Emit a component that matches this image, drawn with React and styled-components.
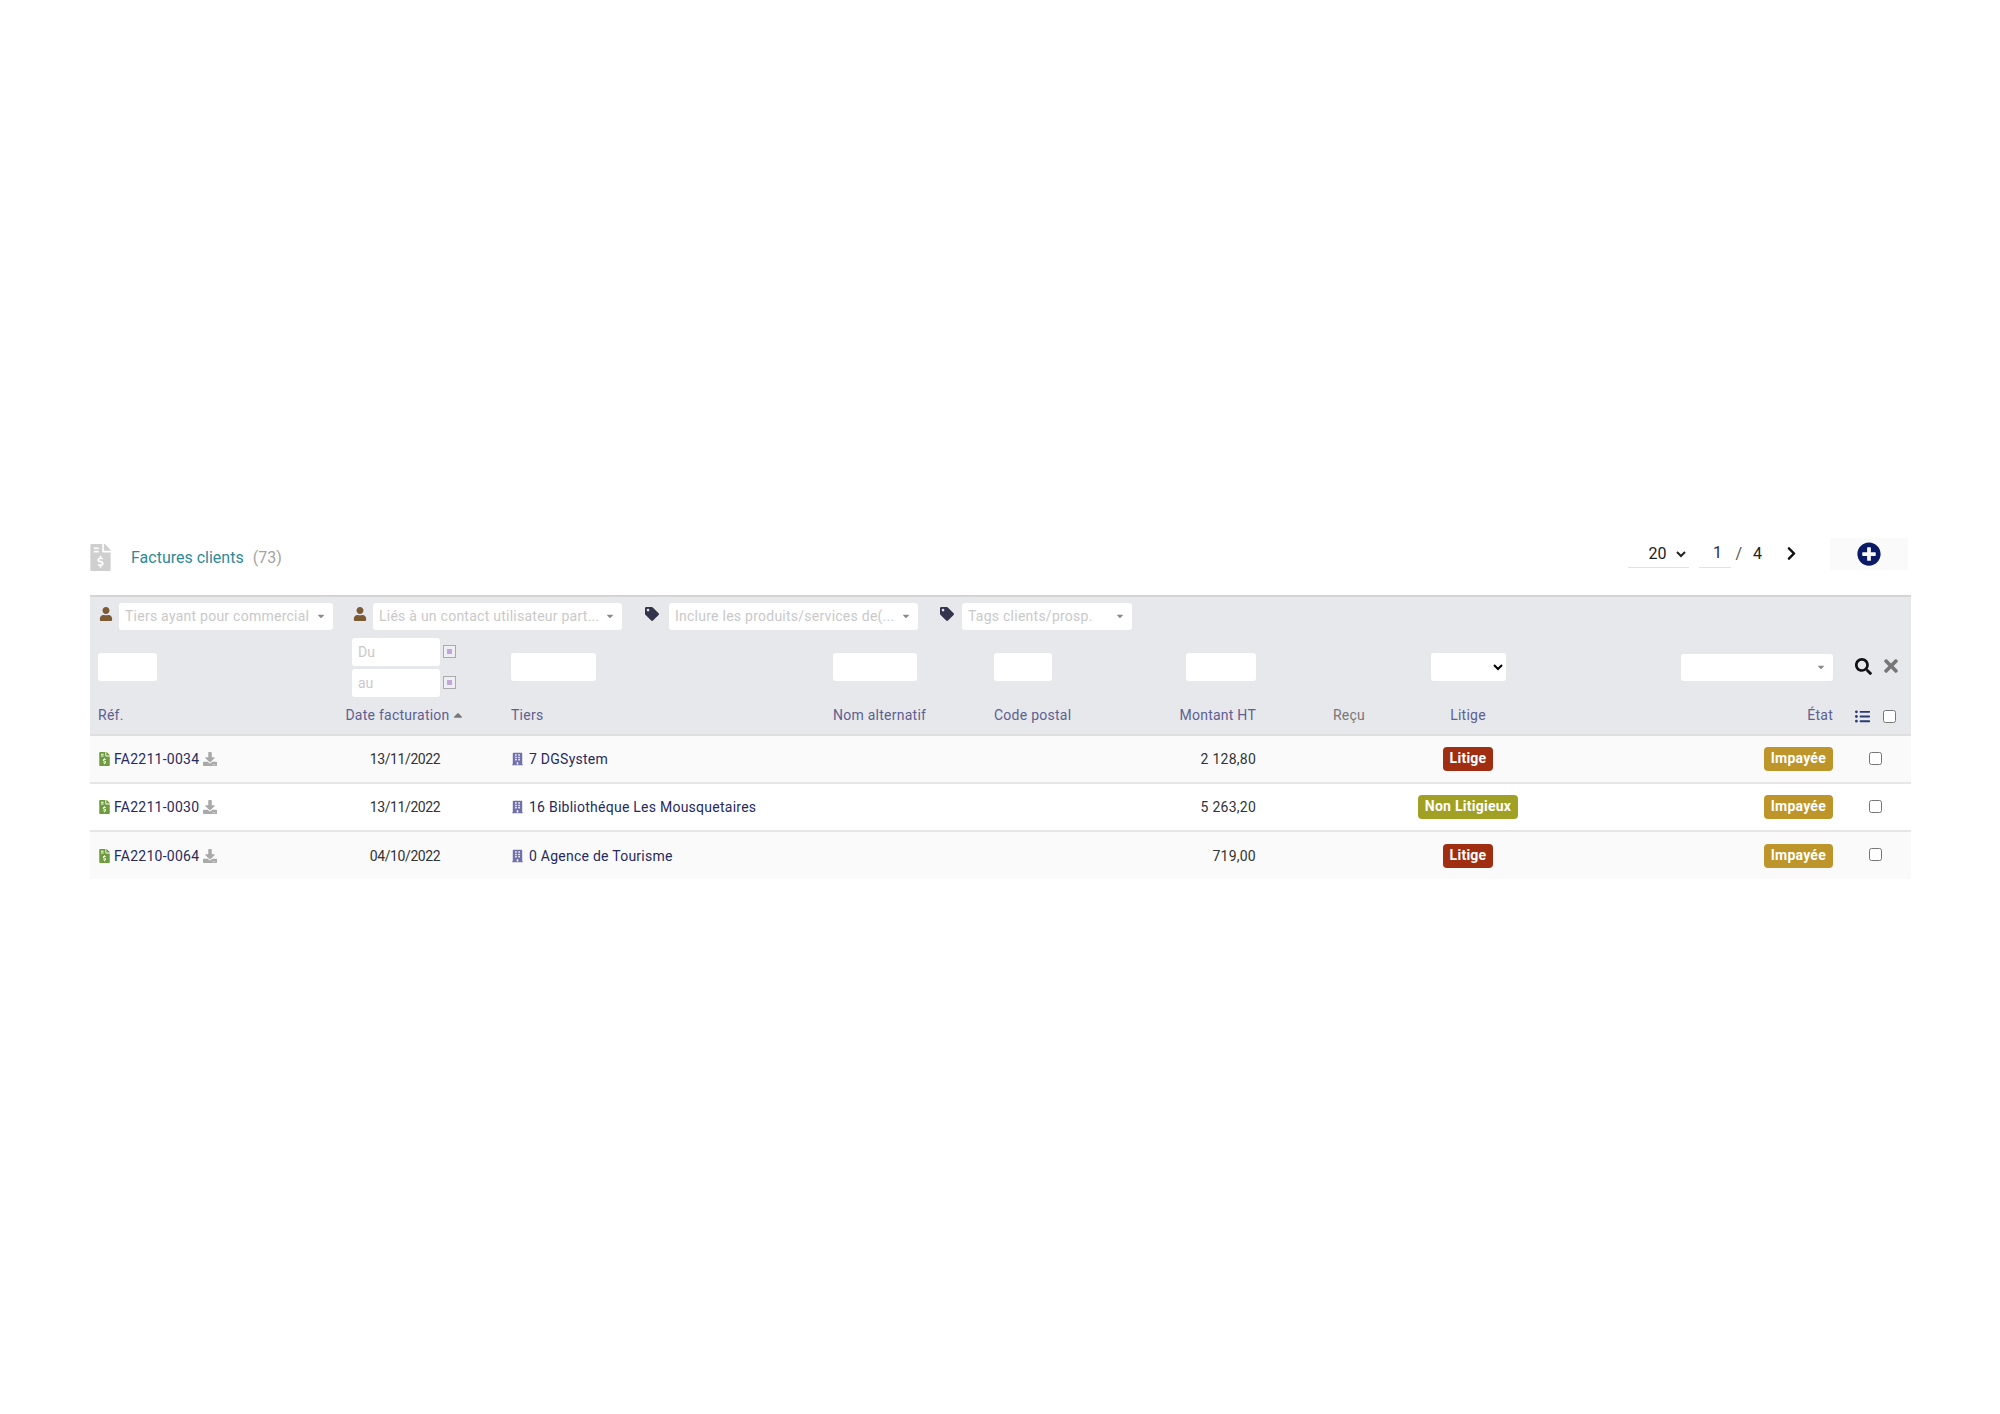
import React from "react";
import styled, { createGlobalStyle } from "styled-components";
import {
  FaFileInvoiceDollar,
  FaUser,
  FaTag,
  FaBuilding,
  FaDownload,
  FaPlusCircle,
  FaSearch,
  FaTimes,
  FaListUl,
  FaChevronRight,
  FaCaretDown,
  FaCaretUp,
} from "react-icons/fa";

const GlobalStyle = createGlobalStyle`
  body {
    margin: 0;
    background: #fff;
    font-family: Roboto, "Liberation Sans", sans-serif;
    font-size: 14px;
    letter-spacing: 0.25px;
  }
`;

const COLUMNS = "217px 196px 322px 161px 114px 164px 109px 190px 278px 70px";

const Page = styled.div`
  width: 2000px;
  height: 1414px;
  box-sizing: border-box;
  padding: 530px 89px 0 90px;
`;

const TitleBar = styled.header`
  display: flex;
  align-items: center;
  justify-content: space-between;
  height: 65px;
  padding-right: 3px;
  letter-spacing: 0;
`;

const TitleGroup = styled.div`
  display: flex;
  align-items: center;
  padding-bottom: 11px;
`;

const TitleIcon = styled(FaFileInvoiceDollar)`
  width: 21px;
  height: 27px;
  color: #cfcfcf;
  margin-right: 20px;
`;

const Title = styled.h1`
  margin: 0;
  font-size: 16px;
  font-weight: 400;
  color: #2f8a98;
`;

const Count = styled.span`
  margin-left: 9px;
  font-size: 16px;
  color: #a3a3a3;
`;

const Pager = styled.div`
  display: flex;
  align-items: center;
  height: 32px;
  margin-top: -18px;
  font-size: 16px;
  color: #222;
`;

const PerPage = styled.select`
  width: 61px;
  height: 28px;
  padding: 0 0 0 16px;
  background: #fff;
  border: 0;
  border-bottom: 1px solid #e2e2e2;
  font-family: inherit;
  font-size: 16px;
  color: #222;
`;

const PageNumber = styled.span`
  box-sizing: border-box;
  width: 32px;
  height: 28px;
  margin-left: 10px;
  padding-left: 4px;
  line-height: 26px;
  text-align: center;
  border-bottom: 1px solid #e2e2e2;
  color: #262a5e;
`;

const Slash = styled.span`
  margin-left: 4px;
  color: #555;
`;

const PageTotal = styled.span`
  margin-left: 11px;
`;

const NextIcon = styled(FaChevronRight)`
  width: 13px;
  height: 15px;
  margin-left: 23px;
  color: #111;
`;

const AddButton = styled.button`
  display: flex;
  align-items: center;
  justify-content: center;
  width: 78px;
  height: 32px;
  margin-left: 32px;
  padding: 0;
  background: #fafafa;
  border: 0;
  color: #0a1a66;
`;

const FilterPanel = styled.section`
  background: #e7e8ec;
  border-top: 2px solid #d4d4d4;
  border-bottom: 2px solid #dfdfdf;
`;

const TagRow = styled.div`
  display: flex;
  align-items: center;
  height: 40px;
  padding: 0 0 2px 9px;
  box-sizing: border-box;
`;

const TagFilter = styled.div`
  display: flex;
  align-items: center;
  margin-right: ${(p) => p.$gap}px;
`;

const PickerIcon = styled.span`
  display: flex;
  align-items: center;
  justify-content: center;
  width: 14px;
  height: 14px;
  margin: -4px ${(p) => p.$gap}px 0 0;
  color: ${(p) => p.$color};
`;

const Picker = styled.div`
  display: flex;
  align-items: center;
  justify-content: space-between;
  box-sizing: border-box;
  width: ${(p) => p.$width}px;
  height: 27px;
  margin-right: ${(p) => p.$end || 0}px;
  padding: 0 7px 0 6px;
  background: #fff;
  border-radius: 3px;
  color: #c9c9c9;
  white-space: nowrap;
  overflow: hidden;
`;

const Caret = styled(FaCaretDown)`
  flex: none;
  width: 10px;
  height: 10px;
  color: #8a8a8a;
`;

const TableGrid = styled.div`
  display: grid;
  grid-template-columns: ${COLUMNS};
  align-items: center;
`;

const InputRow = styled(TableGrid)`
  height: 60px;
`;

const InputCell = styled.div`
  display: flex;
  padding-left: 8px;
  justify-content: ${(p) => p.$justify || "flex-start"};
`;

const TextBox = styled.input`
  box-sizing: border-box;
  width: ${(p) => p.$width}px;
  height: 28px;
  margin-right: ${(p) => p.$end || 0}px;
  padding: 0 6px;
  background: #fff;
  border: 0;
  border-radius: 3px;
  font-family: inherit;
  font-size: 14px;
  &::placeholder {
    color: #c9c9c9;
  }
`;

const DateStack = styled.div`
  display: flex;
  flex-direction: column;
  gap: 3px;
  margin-left: 37px;
`;

const DateLine = styled.div`
  display: flex;
  align-items: center;
  gap: 3px;
`;

const NativeSelect = styled.select`
  width: 75px;
  height: 28px;
  margin-right: 8px;
  background: #fff;
  border: 0;
  border-radius: 3px;
`;

const ActionCell = styled.div`
  display: flex;
  align-items: center;
  gap: 9px;
  padding: 0 0 2px 14px;
`;

const HeadRow = styled(TableGrid)`
  height: 37px;
  padding-bottom: 2px;
  box-sizing: border-box;
`;

const HeadCell = styled.div`
  padding: 0 8px;
  color: ${(p) => p.$color || "#5d6090"};
  text-align: ${(p) => p.$align || "left"};
  white-space: nowrap;
`;

const SortIcon = styled(FaCaretUp)`
  width: 14px;
  height: 14px;
  margin-left: 1px;
  vertical-align: -2px;
  color: #777;
`;

const HeadTools = styled.div`
  display: flex;
  align-items: center;
  gap: 13px;
  padding: 3px 0 0 14px;
  color: #2a3a78;
`;

const Check = styled.input.attrs({ type: "checkbox" })`
  width: 13px;
  height: 13px;
  margin: 0;
`;

const Row = styled(TableGrid)`
  height: ${(p) => (p.$last ? 47 : 48)}px;
  background: ${(p) => (p.$odd ? "#fafafa" : "#fff")};
  border-bottom: ${(p) => (p.$last ? "0" : "2px solid #e6e6e6")};
  box-sizing: border-box;
  color: #262a5e;
`;

const Cell = styled.div`
  display: flex;
  align-items: center;
  justify-content: ${(p) => p.$justify || "flex-start"};
  padding: 0 8px;
  color: ${(p) => p.$color || "inherit"};
  white-space: nowrap;
`;

const DateCell = styled(Cell)`
  letter-spacing: -0.4px;
  color: #333;
`;

const RefIcon = styled(FaFileInvoiceDollar)`
  width: 11px;
  height: 14px;
  margin: 0 4px 0 1px;
  color: #6f9c3f;
`;

const DownloadIcon = styled(FaDownload)`
  width: 14px;
  height: 14px;
  margin-left: 4px;
  color: #a9a9a9;
`;

const CompanyIcon = styled(FaBuilding)`
  width: 11px;
  height: 14px;
  margin: 0 6px 0 1px;
  color: #7070ac;
`;

const Badge = styled.span`
  display: inline-block;
  padding: 0 7px;
  height: 24px;
  line-height: 23px;
  border-radius: 4px;
  background: ${(p) => p.$bg};
  color: #fff;
  font-weight: 700;
`;

const RowCheck = styled.div`
  display: flex;
  padding: 0 0 2px 28px;
`;

const CalendarIcon = () => (
  <svg width="13" height="13" viewBox="0 0 13 13">
    <rect x="0.5" y="0.5" width="12" height="12" fill="#eeeef4" stroke="#aaa" />
    <rect x="4" y="4" width="5" height="5" fill="#c2a8d8" />
  </svg>
);

const filters = [
  { icon: FaUser, color: "#7a5b34", label: "Tiers ayant pour commercial", width: 214, gap: 20, iconGap: 6 },
  { icon: FaUser, color: "#7a5b34", label: "Liés à un contact utilisateur part...", width: 249, gap: 23, iconGap: 6 },
  { icon: FaTag, color: "#33344c", label: "Inclure les produits/services de(...", width: 249, gap: 22, iconGap: 10 },
  { icon: FaTag, color: "#33344c", label: "Tags clients/prosp.", width: 170, gap: 0, iconGap: 8 },
];

const invoices = [
  { ref: "FA2211-0034", date: "13/11/2022", client: "7 DGSystem", amount: "2 128,80", dispute: "Litige" },
  { ref: "FA2211-0030", date: "13/11/2022", client: "16 Bibliothéque Les Mousquetaires", amount: "5 263,20", dispute: "Non Litigieux" },
  { ref: "FA2210-0064", date: "04/10/2022", client: "0 Agence de Tourisme", amount: "719,00", dispute: "Litige" },
];

export default function App() {
  return (
    <Page>
      <GlobalStyle />
      <TitleBar>
        <TitleGroup>
          <TitleIcon />
          <Title>Factures clients</Title>
          <Count>(73)</Count>
        </TitleGroup>
        <Pager>
          <PerPage defaultValue="20">
            <option>20</option>
          </PerPage>
          <PageNumber>1</PageNumber>
          <Slash>/</Slash>
          <PageTotal>4</PageTotal>
          <NextIcon />
          <AddButton>
            <FaPlusCircle size={24} />
          </AddButton>
        </Pager>
      </TitleBar>

      <FilterPanel>
        <TagRow>
          {filters.map((f) => (
            <TagFilter key={f.label} $gap={f.gap}>
              <PickerIcon $color={f.color} $gap={f.iconGap}>
                <f.icon size={14} />
              </PickerIcon>
              <Picker $width={f.width}>
                {f.label}
                <Caret />
              </Picker>
            </TagFilter>
          ))}
        </TagRow>

        <InputRow>
          <InputCell>
            <TextBox $width={59} />
          </InputCell>
          <InputCell>
            <DateStack>
              <DateLine>
                <TextBox $width={88} placeholder="Du" />
                <CalendarIcon />
              </DateLine>
              <DateLine>
                <TextBox $width={88} placeholder="au" />
                <CalendarIcon />
              </DateLine>
            </DateStack>
          </InputCell>
          <InputCell>
            <TextBox $width={85} />
          </InputCell>
          <InputCell>
            <TextBox $width={84} />
          </InputCell>
          <InputCell>
            <TextBox $width={58} />
          </InputCell>
          <InputCell $justify="flex-end">
            <TextBox $width={70} $end={8} />
          </InputCell>
          <div />
          <InputCell $justify="center">
            <NativeSelect />
          </InputCell>
          <InputCell $justify="flex-end">
            <Picker $width={152} $end={8}>
              <span />
              <Caret />
            </Picker>
          </InputCell>
          <ActionCell>
            <FaSearch size={17} color="#111" />
            <FaTimes size={20} color="#777" />
          </ActionCell>
        </InputRow>

        <HeadRow>
          <HeadCell>Réf.</HeadCell>
          <HeadCell $align="center">
            Date facturation
            <SortIcon />
          </HeadCell>
          <HeadCell>Tiers</HeadCell>
          <HeadCell>Nom alternatif</HeadCell>
          <HeadCell>Code postal</HeadCell>
          <HeadCell $align="right">Montant HT</HeadCell>
          <HeadCell $align="right" $color="#777">
            Reçu
          </HeadCell>
          <HeadCell $align="center">Litige</HeadCell>
          <HeadCell $align="right">État</HeadCell>
          <HeadTools>
            <FaListUl size={15} />
            <Check />
          </HeadTools>
        </HeadRow>
      </FilterPanel>

      {invoices.map((inv, i) => (
        <Row key={inv.ref} $odd={i % 2 === 0} $last={i === invoices.length - 1}>
          <Cell>
            <RefIcon />
            {inv.ref}
            <DownloadIcon />
          </Cell>
          <DateCell $justify="center">{inv.date}</DateCell>
          <Cell>
            <CompanyIcon />
            {inv.client}
          </Cell>
          <Cell />
          <Cell />
          <Cell $justify="flex-end" $color="#333">
            {inv.amount}
          </Cell>
          <Cell />
          <Cell $justify="center">
            <Badge $bg={inv.dispute === "Litige" ? "#a02e10" : "#a0a024"}>{inv.dispute}</Badge>
          </Cell>
          <Cell $justify="flex-end">
            <Badge $bg="#bd952a">Impayée</Badge>
          </Cell>
          <RowCheck>
            <Check />
          </RowCheck>
        </Row>
      ))}
    </Page>
  );
}
